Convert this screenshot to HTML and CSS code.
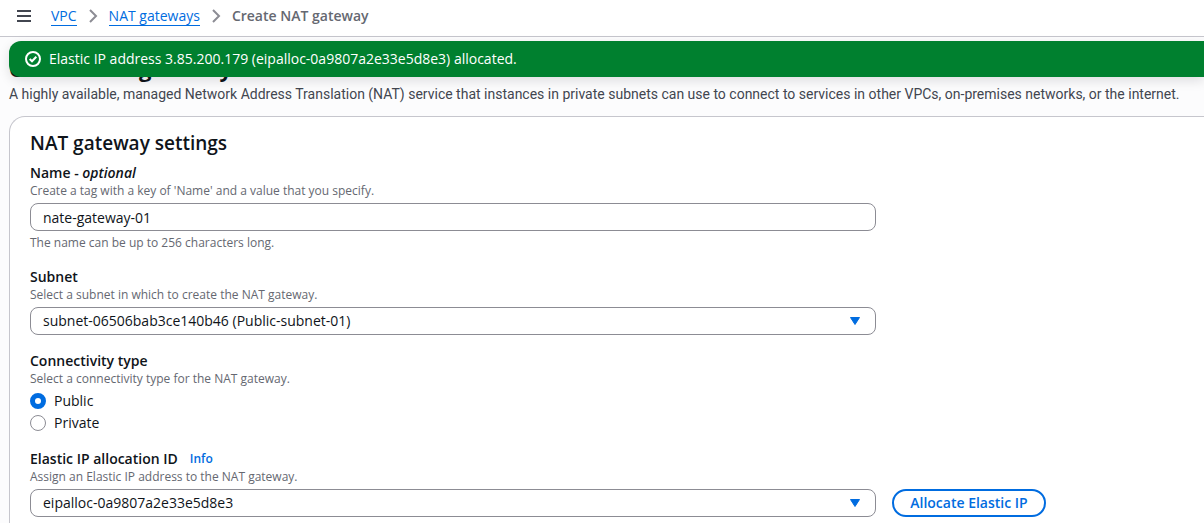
FILE: index.html
```html
<!DOCTYPE html>
<html lang="en">
<head>
<meta charset="utf-8">
<meta name="viewport" content="width=device-width, initial-scale=1">
<title>Create NAT gateway</title>
<link rel="stylesheet" href="styles.css">
</head>
<body>
<header class="topbar">
  <button class="menu-button" type="button" aria-label="Open navigation">
    <svg width="16" height="16" viewBox="0 0 16 16" fill="none" stroke="currentColor" stroke-width="2"><path d="M1 3h14M1 8h14M1 13h14"/></svg>
  </button>
  <nav aria-label="Breadcrumbs">
    <ol class="breadcrumbs">
      <li><a href="#">VPC</a></li>
      <li class="separator" aria-hidden="true"><svg width="16" height="16" viewBox="0 0 16 16" fill="none" stroke="currentColor" stroke-width="2"><path d="M5 2l6 6-6 6"/></svg></li>
      <li><a href="#">NAT gateways</a></li>
      <li class="separator" aria-hidden="true"><svg width="16" height="16" viewBox="0 0 16 16" fill="none" stroke="currentColor" stroke-width="2"><path d="M5 2l6 6-6 6"/></svg></li>
      <li class="current" aria-current="page">Create NAT gateway</li>
    </ol>
  </nav>
</header>
<main class="page">
  <div class="flash" role="status">
    <svg width="16" height="16" viewBox="0 0 16 16" fill="none" stroke="currentColor" stroke-width="2"><circle cx="8" cy="8" r="7"/><path d="M4.7 8l2.3 2.3 4.300-4.600"/></svg>
    <span>Elastic IP address 3.85.200.179 (eipalloc-0a9807a2e33e5d8e3) allocated.</span>
  </div>
  <h1 class="page-title">Create NAT gateway</h1>
  <p class="page-description">A highly available, managed Network Address Translation (NAT) service that instances in private subnets can use to connect to services in other VPCs, on-premises networks, or the internet.</p>
  <form class="card">
    <h2 class="card-title">NAT gateway settings</h2>
    <div class="field">
      <label class="label" for="name">Name - <i>optional</i></label>
      <p class="help">Create a tag with a key of 'Name' and a value that you specify.</p>
      <div class="control-row"><input class="control" id="name" type="text" value="nate-gateway-01"></div>
      <p class="help constraint">The name can be up to 256 characters long.</p>
    </div>
    <div class="field">
      <label class="label" for="subnet">Subnet</label>
      <p class="help">Select a subnet in which to create the NAT gateway.</p>
      <div class="control-row">
        <div class="select">
          <select class="control" id="subnet"><option>subnet-06506bab3ce140b46 (Public-subnet-01)</option></select>
          <svg class="caret" width="12" height="10" viewBox="0 0 12 10" fill="currentColor" stroke="currentColor" stroke-linejoin="round"><path d="M1.5 1.5h9L6 8.5z"/></svg>
        </div>
      </div>
    </div>
    <fieldset class="field">
      <legend class="label">Connectivity type</legend>
      <p class="help">Select a connectivity type for the NAT gateway.</p>
      <div class="radios">
        <label class="radio"><input type="radio" name="connectivity" checked>Public</label>
        <label class="radio"><input type="radio" name="connectivity">Private</label>
      </div>
    </fieldset>
    <div class="field">
      <div class="label-row"><label class="label" for="allocation">Elastic IP allocation ID</label><a class="info" href="#">Info</a></div>
      <p class="help">Assign an Elastic IP address to the NAT gateway.</p>
      <div class="control-row">
        <div class="select">
          <select class="control" id="allocation"><option>eipalloc-0a9807a2e33e5d8e3</option></select>
          <svg class="caret" width="12" height="10" viewBox="0 0 12 10" fill="currentColor" stroke="currentColor" stroke-linejoin="round"><path d="M1.5 1.5h9L6 8.5z"/></svg>
        </div>
        <button class="button" type="button">Allocate Elastic IP</button>
      </div>
    </div>
  </form>
</main>
</body>
</html>
```
FILE: styles.css
```css
* { box-sizing: border-box; }

body {
  margin: 0;
  background: #fcfcfd;
  color: #0f141a;
  font: 14px/20px "Open Sans", "Noto Sans", sans-serif;
  overflow: hidden;
}

h1, h2, p, ol, fieldset { margin: 0; padding: 0; }
svg { display: block; flex: none; }
a { color: #006ce0; }

.topbar {
  display: flex;
  align-items: center;
  gap: 19px;
  padding: 6px 16px 10px;
  background: #fff;
  border-bottom: 1px solid #c6c6cd;
}

.menu-button {
  padding: 0;
  border: 0;
  background: none;
  color: #424650;
}

.breadcrumbs {
  display: flex;
  align-items: center;
  gap: 8px;
  list-style: none;
}
.breadcrumbs a {
  display: block;
  line-height: 18px;
  border-bottom: 1px solid;
  text-decoration: none;
}
.separator { color: #8c8c94; }
.current { color: #656871; font-weight: 600; }

.page {
  position: relative;
  padding: 15px 0 0 9px;
}

.flash {
  position: absolute;
  top: 4px;
  left: 9px;
  right: 0;
  display: flex;
  align-items: center;
  gap: 8px;
  padding: 8px 16px;
  border-radius: 12px 0 0 12px;
  background: #00802f;
  color: #fff;
  font-weight: 500;
  box-shadow: 0 4px 12px rgba(0, 7, 22, 0.12);
}

.page-title { font-size: 22px; line-height: 32px; font-weight: 700; }
.page-description {
  color: #424650;
  font-family: Roboto, "Open Sans", sans-serif;
  white-space: nowrap;
}

.card {
  display: flex;
  flex-direction: column;
  gap: 16px;
  margin-top: 12px;
  padding: 14px 0 24px 20px;
  background: #fff;
  border: 1px solid #c6c6cd;
  border-right: 0;
  border-radius: 16px 0 0 0;
}
.card-title {
  margin-bottom: -8px;
  font-size: 19px;
  line-height: 24px;
  font-weight: 600;
}

.field { min-width: 0; border: 0; }
.label { display: block; padding: 0; font-weight: 600; }
.label-row { display: flex; align-items: center; gap: 12px; }
.info { font-size: 12px; font-weight: 600; text-decoration: none; }
.help { color: #656871; font-size: 12px; line-height: 16px; }
.constraint { margin-top: 4px; }

.control-row {
  display: grid;
  grid-template-columns: minmax(0, 19fr) 7fr;
  gap: 16px;
  margin-top: 4px;
}
.control {
  width: 100%;
  height: 28px;
  padding: 0 12px;
  border: 1px solid #8c8c94;
  border-radius: 8px;
  background: #fff;
  color: inherit;
  font: inherit;
  appearance: none;
}
.select { display: grid; align-items: center; }
.select > * { grid-area: 1 / 1; }
.caret {
  justify-self: end;
  margin-right: 15px;
  color: #006ce0;
  pointer-events: none;
}

.radios {
  display: flex;
  flex-direction: column;
  align-items: flex-start;
  gap: 2px;
  margin-top: 4px;
}
.radio { display: flex; align-items: center; gap: 8px; }
.radio input {
  width: 16px;
  height: 16px;
  margin: 0;
  border: 1px solid #8c8c94;
  border-radius: 50%;
  background: #fff;
  appearance: none;
}
.radio input:checked { border: 5px solid #006ce0; }

.button {
  justify-self: start;
  height: 28px;
  padding: 0 16px;
  border: 2px solid #006ce0;
  border-radius: 14px;
  background: #fff;
  color: #006ce0;
  font: inherit;
  font-weight: 600;
}
```
